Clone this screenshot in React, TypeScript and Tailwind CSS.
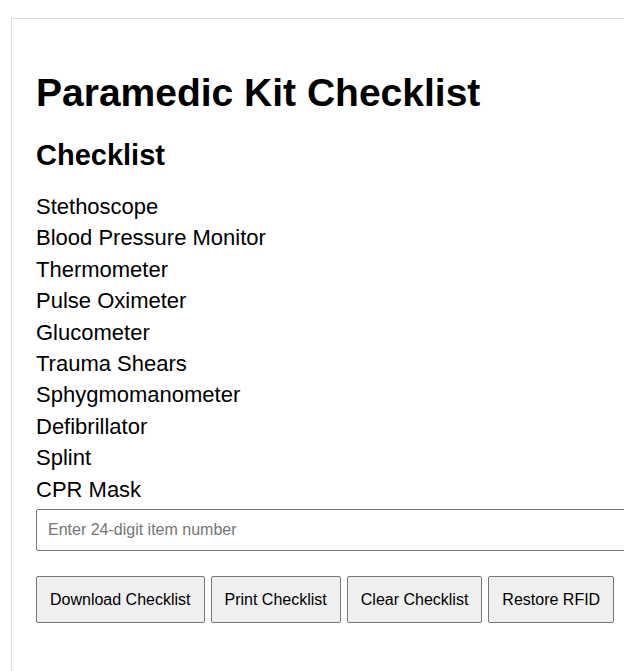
const ITEMS = [
  'Stethoscope',
  'Blood Pressure Monitor',
  'Thermometer',
  'Pulse Oximeter',
  'Glucometer',
  'Trauma Shears',
  'Sphygmomanometer',
  'Defibrillator',
  'Splint',
  'CPR Mask',
];

const BUTTONS = ['Download Checklist', 'Print Checklist', 'Clear Checklist', 'Restore RFID'];

export default function App() {
  return (
    <div className="h-[671px] bg-white pt-[18px] pl-[11px] overflow-hidden" style={{ fontFamily: '"Liberation Sans", Arial, sans-serif' }}>
      <div className="w-[640px] min-h-[700px] border border-[#dcdcdc] pl-[24px] pt-[50px] text-black">
        <h1 className="text-[39px] font-bold leading-[48px]">Paramedic Kit Checklist</h1>
        <h2 className="mt-[20px] text-[29px] font-bold leading-[36px]">Checklist</h2>
        <ul className="mt-[18px]">
          {ITEMS.map(item => (
            <li key={item} className="text-[22px] leading-[31.4px]">{item}</li>
          ))}
        </ul>
        <input
          type="text"
          placeholder="Enter 24-digit item number"
          className="mt-[4px] block w-[620px] h-[42px] px-[11px] border border-[#767676] rounded-[2px] text-[16px] placeholder:text-[#757575] outline-none"
        />
        <div className="mt-[25px] flex gap-[6px]">
          {BUTTONS.map(b => (
            <button key={b} className="h-[47px] px-[13px] bg-[#efefef] border border-[#767676] rounded-[2px] text-[16px] text-black">
              {b}
            </button>
          ))}
        </div>
      </div>
    </div>
  );
}
